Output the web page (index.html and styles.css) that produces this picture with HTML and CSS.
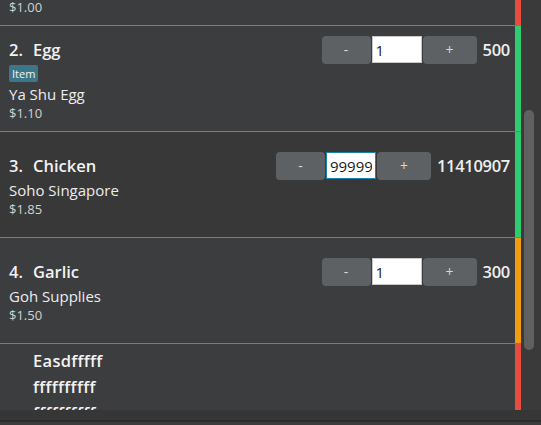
FILE: index.html
```html
<!DOCTYPE html>
<html>
<head>
<meta charset="utf-8">
<link rel="stylesheet" href="styles.css">
</head>
<body>
<div class="app">
  <div class="main">
    <div class="list">
      <div class="list-inner">
        <div class="row">
          <div class="content">
            <div class="header">
              <div class="title"><span class="num">1.</span><span class="name">Apple</span></div>
              <div class="controls">
                <button class="btn minus">-</button>
                <input class="qty" value="1">
                <button class="btn plus">+</button>
                <span class="stock">200</span>
              </div>
            </div>
            <div class="tags"><span class="tag">Item</span></div>
            <div class="supplier">Fruit Co</div>
            <div class="price">$1.00</div>
          </div>
          <div class="bar red"></div>
        </div>

        <div class="row">
          <div class="content">
            <div class="header">
              <div class="title"><span class="num">2.</span><span class="name">Egg</span></div>
              <div class="controls">
                <button class="btn minus">-</button>
                <input class="qty" value="1">
                <button class="btn plus">+</button>
                <span class="stock">500</span>
              </div>
            </div>
            <div class="tags"><span class="tag">Item</span></div>
            <div class="supplier">Ya Shu Egg</div>
            <div class="price">$1.10</div>
          </div>
          <div class="bar green"></div>
        </div>

        <div class="row dark">
          <div class="content">
            <div class="header">
              <div class="title"><span class="num">3.</span><span class="name">Chicken</span></div>
              <div class="controls">
                <button class="btn minus">-</button>
                <input class="qty focused" value="99999">
                <button class="btn plus">+</button>
                <span class="stock">11410907</span>
              </div>
            </div>
            <div class="supplier">Soho Singapore</div>
            <div class="price">$1.85</div>
          </div>
          <div class="bar green"></div>
        </div>

        <div class="row">
          <div class="content">
            <div class="header">
              <div class="title"><span class="num">4.</span><span class="name">Garlic</span></div>
              <div class="controls">
                <button class="btn minus">-</button>
                <input class="qty" value="1">
                <button class="btn plus">+</button>
                <span class="stock">300</span>
              </div>
            </div>
            <div class="supplier">Goh Supplies</div>
            <div class="price">$1.50</div>
          </div>
          <div class="bar orange"></div>
        </div>

        <div class="row tall">
          <div class="content">
            <div class="header">
              <div class="title"><span class="num">5.</span><span class="name wrap">Easdfffff ffffffffff ffffffffff ffffffffff ffffffffff ffffffffff ffffffffff ffffffffff ffffffffff</span></div>
              <div class="controls">
                <button class="btn minus">-</button>
                <input class="qty" value="1">
                <button class="btn plus">+</button>
                <span class="stock">0</span>
              </div>
            </div>
          </div>
          <div class="bar red"></div>
        </div>
      </div>
    </div>
    <div class="scroll">
      <div class="thumb"></div>
    </div>
  </div>
  <div class="footer"></div>
</div>
</body>
</html>
```

FILE: styles.css
```css
* { box-sizing: border-box; }
html, body { margin: 0; padding: 0; }
body {
  width: 541px;
  height: 425px;
  overflow: hidden;
  background: #3b3b3b;
  font-family: "Open Sans", "Noto Sans", sans-serif;
  color: #f0f0f0;
}
.app { display: flex; flex-direction: column; height: 425px; }
.main { display: flex; height: 410px; overflow: hidden; }
.list { width: 521px; overflow: hidden; background: #3c3d3f; }
.list-inner { margin-top: -80px; }
.row {
  display: flex;
  height: 106px;
  border-bottom: 1px solid #7c7c7c;
  background: #3c3d3f;
}
.row.dark { background: #383838; }
.row.tall { height: auto; }
.content {
  flex: 1;
  display: flex;
  flex-direction: column;
  justify-content: center;
  padding: 0 5px 0 9px;
}
.row.tall .content { justify-content: flex-start; padding-top: 4px; }
.bar { width: 6px; flex: none; }
.bar.red { background: #e74c3c; }
.bar.green { background: #2ecc71; }
.bar.orange { background: #f39c12; }
.header { display: flex; align-items: center; min-height: 29px; }
.title {
  display: flex;
  align-items: center;
  font-size: 16.5px;
  font-weight: 600;
  color: #f2f2f2;
}
.num { width: 24px; flex: none; }
.name.wrap { width: 72px; line-height: 26px; letter-spacing: 0.3px; }
.controls { margin-left: auto; display: flex; align-items: center; }
.btn {
  height: 28px;
  border: none;
  border-radius: 4px;
  background: #5e6164;
  color: #d6d6d6;
  font-family: inherit;
  font-size: 14px;
  padding: 0;
}
.btn.minus { width: 49px; margin-right: 1px; }
.btn.plus { width: 54px; margin-left: 1px; }
.qty {
  width: 50px;
  height: 27px;
  border: 1px solid #c9c9c9;
  background: #ffffff;
  color: #1a1a1a;
  font-family: inherit;
  font-size: 15px;
  padding: 0 3px;
  outline: none;
}
.qty.focused { border-color: #1b82b0; }
.stock {
  margin-left: 6px;
  font-size: 16.5px;
  font-weight: 600;
  color: #eeeeee;
  letter-spacing: -0.3px;
}
.tags { display: flex; padding: 1px 0 2px; }
.tag {
  background: #3b7689;
  color: #f4f4f4;
  font-size: 11px;
  line-height: 17px;
  padding: 0 3px;
  border-radius: 2px;
}
.supplier { font-size: 15px; line-height: 20px; color: #ececec; }
.price { font-size: 13px; line-height: 18px; color: #d2d2d2; }
.scroll { width: 20px; flex: none; background: #3a3a3a; padding: 110px 0 0 3px; }
.thumb { width: 10px; height: 240px; background: #606060; border-radius: 5px; }
.footer { height: 15px; background: #3b3b3b; border-top: 10px solid #363636; box-shadow: inset 0 1px 0 #2a2a2a, inset 0 2px 0 #2c2c2c; }
```
